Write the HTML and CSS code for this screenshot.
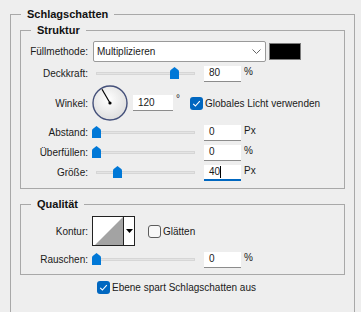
FILE: index.html
```html
<!DOCTYPE html>
<html lang="de">
  <head>
    <meta charset="UTF-8" />
    <meta name="viewport" content="width=device-width, initial-scale=1.0" />
    <title>Schlagschatten</title>

    <link rel="stylesheet" href="styles.css">
  </head>
  <body>
    <fieldset class="group outer">
      <legend>Schlagschatten</legend>

      <!-- Struktur -->
      <fieldset class="group struct">
        <legend>Struktur</legend>

        <div class="row blend">
          <span class="lbl">Füllmethode:</span>
          <div class="select">
            <span>Multiplizieren</span>
            <svg class="chev" width="9" height="5" viewBox="0 0 9 5"><path d="M0.5 0.5 L4.5 4.5 L8.5 0.5" fill="none" stroke="#666" stroke-width="1"/></svg>
          </div>
          <div class="swatch"></div>
        </div>

        <div class="row">
          <span class="lbl">Deckkraft:</span>
          <div class="slider">
            <div class="track"></div>
            <svg class="thumb" style="left:78px" width="9" height="12" viewBox="0 0 9 12"><path d="M0 4.5 Q0 3.5 1 2.7 L4.5 0 L8 2.7 Q9 3.5 9 4.5 V12 H0 Z" fill="#0078d7"/></svg>
          </div>
          <div class="num">80</div>
          <span class="unit">%</span>
        </div>

        <div class="row angle">
          <span class="lbl">Winkel:</span>
          <svg class="dial" width="36" height="36" viewBox="0 0 36 36">
            <defs>
              <radialGradient id="dialFill" cx="45%" cy="40%" r="60%">
                <stop offset="0" stop-color="#ffffff"/>
                <stop offset="1" stop-color="#dedede"/>
              </radialGradient>
            </defs>
            <circle cx="18" cy="18" r="17" fill="url(#dialFill)" stroke="#44507a" stroke-width="1.4"/>
            <line x1="18" y1="18" x2="10" y2="4.2" stroke="#000" stroke-width="1.2"/>
            <circle cx="18" cy="18" r="1.6" fill="#000"/>
          </svg>
          <div class="num wide">120</div>
          <span class="deg">°</span>
          <span class="check on">
            <svg width="13" height="13" viewBox="0 0 13 13"><path d="M3.2 6.8 L5.4 9 L9.8 4.2" fill="none" stroke="#fff" stroke-width="1.1"/></svg>
          </span>
          <span class="check-lbl">Globales Licht verwenden</span>
        </div>

        <div class="row">
          <span class="lbl">Abstand:</span>
          <div class="slider">
            <div class="track"></div>
            <svg class="thumb" style="left:0px" width="9" height="12" viewBox="0 0 9 12"><path d="M0 4.5 Q0 3.5 1 2.7 L4.5 0 L8 2.7 Q9 3.5 9 4.5 V12 H0 Z" fill="#0078d7"/></svg>
          </div>
          <div class="num">0</div>
          <span class="unit">Px</span>
        </div>

        <div class="row">
          <span class="lbl">Überfüllen:</span>
          <div class="slider">
            <div class="track"></div>
            <svg class="thumb" style="left:0px" width="9" height="12" viewBox="0 0 9 12"><path d="M0 4.5 Q0 3.5 1 2.7 L4.5 0 L8 2.7 Q9 3.5 9 4.5 V12 H0 Z" fill="#0078d7"/></svg>
          </div>
          <div class="num">0</div>
          <span class="unit">%</span>
        </div>

        <div class="row">
          <span class="lbl">Größe:</span>
          <div class="slider">
            <div class="track"></div>
            <svg class="thumb" style="left:21px" width="9" height="12" viewBox="0 0 9 12"><path d="M0 4.5 Q0 3.5 1 2.7 L4.5 0 L8 2.7 Q9 3.5 9 4.5 V12 H0 Z" fill="#0078d7"/></svg>
          </div>
          <div class="num focus">40<span class="caret"></span></div>
          <span class="unit">Px</span>
        </div>
      </fieldset>

      <!-- Qualität -->
      <fieldset class="group quality">
        <legend>Qualität</legend>

        <div class="row contour-row">
          <span class="lbl">Kontur:</span>
          <div class="contour">
            <svg class="preview" width="30" height="28" viewBox="0 0 30 28"><polygon points="2,28 30,0 30,28" fill="#a3a3a3"/></svg>
            <div class="drop">
              <svg width="7" height="4" viewBox="0 0 7 4"><polygon points="0,0 7,0 3.5,4" fill="#000"/></svg>
            </div>
          </div>
          <span class="check off"></span>
          <span class="check-lbl">Glätten</span>
        </div>

        <div class="row noise">
          <span class="lbl">Rauschen:</span>
          <div class="slider">
            <div class="track"></div>
            <svg class="thumb" style="left:0px" width="9" height="12" viewBox="0 0 9 12"><path d="M0 4.5 Q0 3.5 1 2.7 L4.5 0 L8 2.7 Q9 3.5 9 4.5 V12 H0 Z" fill="#0078d7"/></svg>
          </div>
          <div class="num">0</div>
          <span class="unit">%</span>
        </div>
      </fieldset>

      <div class="row knockout">
        <span class="check on">
          <svg width="13" height="13" viewBox="0 0 13 13"><path d="M3.2 6.8 L5.4 9 L9.8 4.2" fill="none" stroke="#fff" stroke-width="1.1"/></svg>
        </span>
        <span class="check-lbl">Ebene spart Schlagschatten aus</span>
      </div>
    </fieldset>
  </body>
</html>
```

FILE: styles.css
```css
/* Dialog base */
body {
  margin: 0;
  background: #eeeeee;
  font-family: "Liberation Sans", Arial, sans-serif;
  font-size: 10px;
  color: #1a1a1a;
  overflow: hidden;
}

/* Group boxes */
.group {
  border: 1px solid #a8a8a8;
  margin: 0;
  min-width: 0;
  padding: 0 8px;
}

.group > legend {
  font-weight: bold;
  font-size: 11px;
  line-height: 16px;
  padding: 0 6px;
  margin-left: 2px;
  color: #111;
}

.outer {
  margin: 6px 0 0 10px;
  width: 345px;
  box-sizing: border-box;
  padding: 0 9px;
  height: 306px;
  border-bottom: none;
}

.outer > legend {
  margin-left: 1px;
}

.struct {
  padding: 3px 8px 7px;
}

.quality {
  margin-top: 7px;
  padding: 4px 8px 6px;
}

/* Rows */
.row {
  display: flex;
  align-items: center;
  height: 17px;
  margin-top: 3px;
}

.lbl {
  flex: none;
  width: 59px;
  margin-right: 4px;
  text-align: right;
  white-space: nowrap;
}

.row.blend {
  height: 21px;
  margin-top: 0;
}

.row.angle {
  height: 36px;
}

.row.contour-row {
  height: 30px;
  margin-top: 0;
}

.row.noise {
  margin-top: 5px;
}

.row.knockout {
  height: 14px;
  margin-top: 5px;
  padding-left: 77px;
}

/* Blend mode dropdown and colour */
.select {
  flex: none;
  box-sizing: border-box;
  width: 173px;
  height: 21px;
  margin-left: 1px;
  padding: 0 4px 0 3px;
  background: #fff;
  border: 1px solid #9a9a9a;
  border-radius: 2px;
  display: flex;
  align-items: center;
  justify-content: space-between;
}

.swatch {
  flex: none;
  box-sizing: border-box;
  width: 32px;
  height: 17px;
  margin-left: 3px;
  background: #000;
  border: 1px solid #7c7c7c;
}

/* Sliders */
.slider {
  flex: none;
  position: relative;
  width: 107px;
  height: 17px;
}

.track {
  position: absolute;
  left: 4px;
  right: 4px;
  top: 7px;
  height: 3px;
  box-sizing: border-box;
  background: #e4e4e4;
  border: 1px solid #d6d6d6;
}

.thumb {
  position: absolute;
  top: 2px;
}

/* Number fields */
.num {
  flex: none;
  box-sizing: border-box;
  width: 37px;
  height: 16px;
  margin-left: 5px;
  padding-left: 5px;
  background: #fff;
  border-bottom: 1px solid #8c8c8c;
  line-height: 16px;
  display: flex;
  align-items: center;
}

.num.wide {
  width: 40px;
}

.num.focus {
  border-bottom: 2px solid #0067c0;
}

.caret {
  display: inline-block;
  width: 1px;
  height: 12px;
  background: #000;
}

.unit {
  margin-left: 3px;
  align-self: flex-start;
  margin-top: 1px;
}

.deg {
  margin-left: 3px;
  align-self: flex-start;
  margin-top: 8px;
}

/* Checkboxes */
.check {
  flex: none;
  box-sizing: border-box;
  width: 13px;
  height: 13px;
  border-radius: 3px;
  display: flex;
}

.check.on {
  background: #0067c0;
}

.check.off {
  background: #f7f7f7;
  border: 1px solid #5c5c5c;
}

.angle .check {
  margin-left: 10px;
}

.contour-row .check {
  margin-left: 13px;
}

.check-lbl {
  margin-left: 2px;
  white-space: nowrap;
}

/* Contour picker */
.contour {
  flex: none;
  box-sizing: border-box;
  width: 43px;
  height: 30px;
  background: #fff;
  border: 1px solid #222;
  display: flex;
}

.preview {
  flex: none;
  border-right: 1px solid #222;
}

.drop {
  flex: 1;
  display: flex;
  align-items: center;
  justify-content: center;
}
```
